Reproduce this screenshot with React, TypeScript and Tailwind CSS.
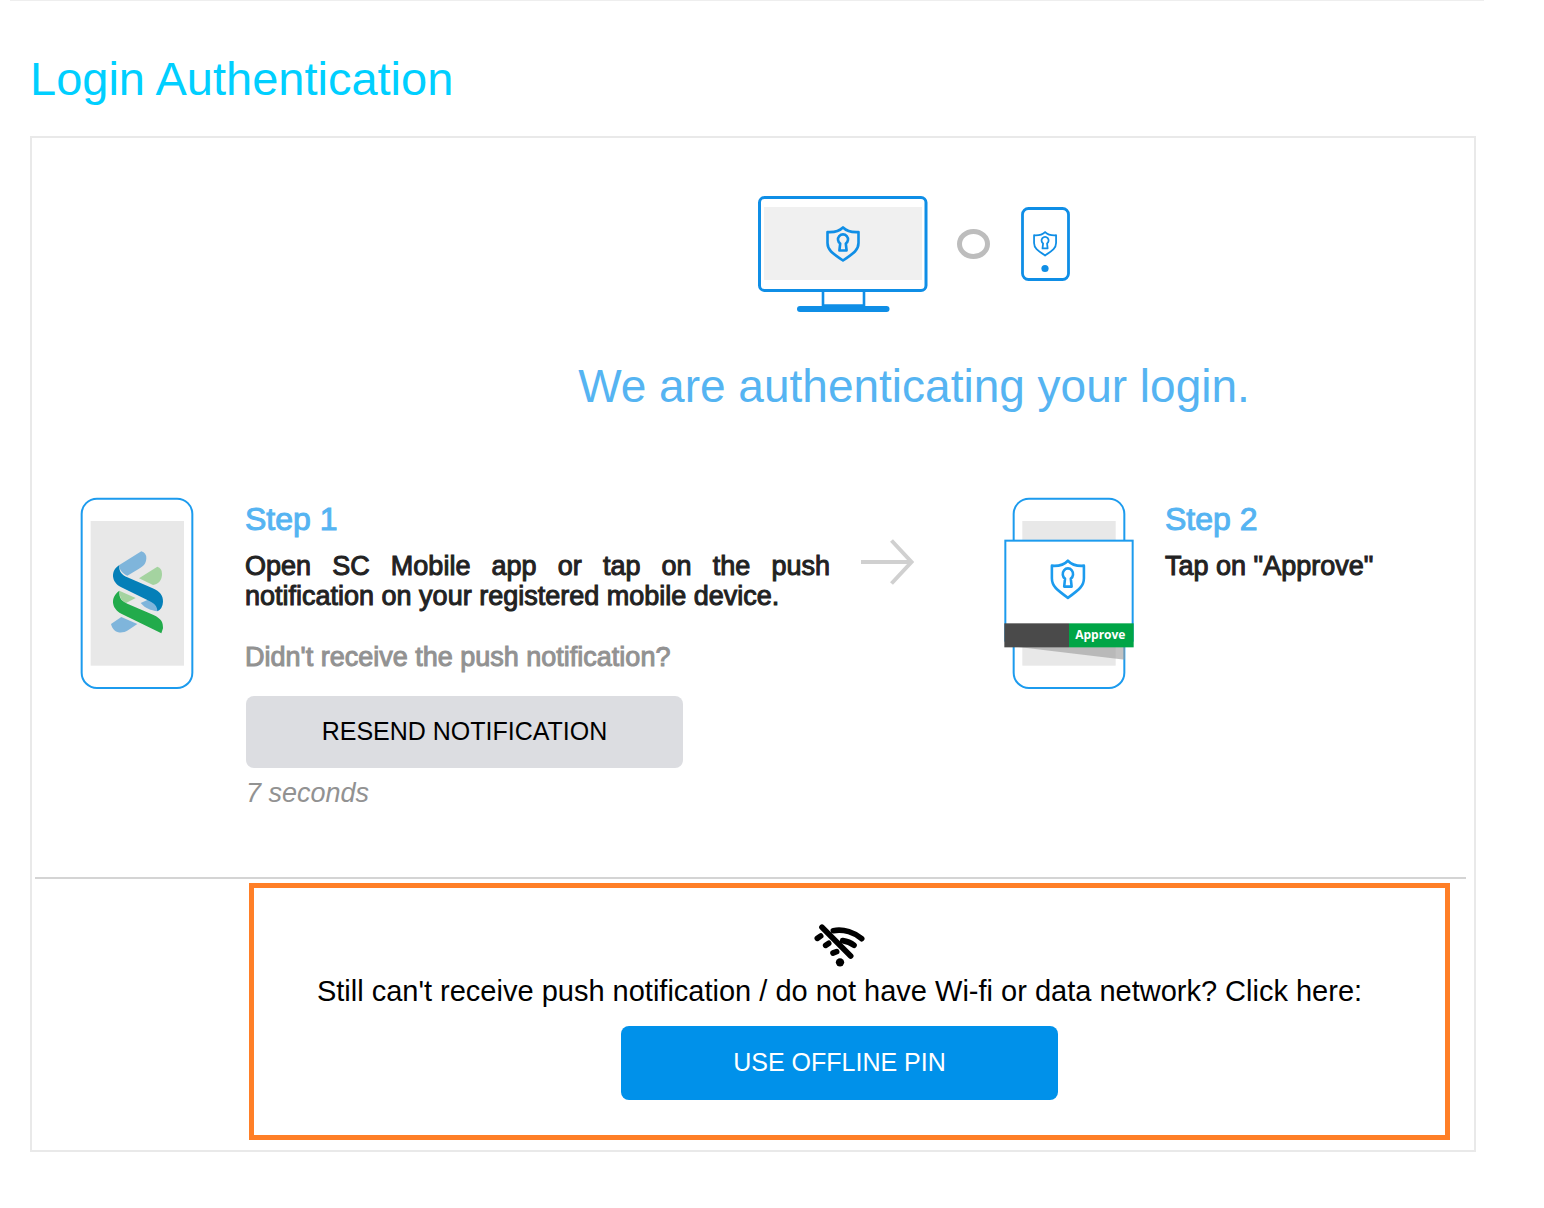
import React, { useState } from 'react';

function Shield() {
  return (
    <g fill="none" stroke="currentColor" strokeLinejoin="round">
      <path d="M17 1.5C13.500 5 9 6.500 1.500 6V17C1.500 24 6 27 17 34.500C28 27 32.500 24 32.500 17V6C25 6.500 20.500 5 17 1.500Z" />
      <path d="M14.200 17.500A5 5 0 1 1 19.800 17.500L20.600 24.500H13.400Z" />
    </g>
  );
}

function MonitorIcon() {
  return (
    <svg className="h-[117px] w-[170px] text-[#0f8ee6]" viewBox="0 0 170 117" fill="none" stroke="currentColor" aria-hidden="true">
      <rect x="6" y="11" width="158" height="73" fill="#f0f0f0" stroke="none" />
      <rect x="1.500" y="1.500" width="166.500" height="93" rx="5" strokeWidth="3" />
      <path d="M65 95v14.500h41V95" strokeWidth="2.600" />
      <path d="M42 113H128.500" strokeWidth="6" strokeLinecap="round" />
      <g transform="translate(68 30)" strokeWidth="2.600">
        <Shield />
      </g>
    </svg>
  );
}

function SmallPhoneIcon() {
  return (
    <svg className="mt-[11px] h-[74px] w-[49px] text-[#0f8ee6]" viewBox="0 0 49 74" fill="none" stroke="currentColor" aria-hidden="true">
      <rect x="1.500" y="1.500" width="46" height="71" rx="6" strokeWidth="2.800" />
      <g transform="translate(12 24) scale(0.710)" strokeWidth="2.500">
        <Shield />
      </g>
      <circle cx="24" cy="61.500" r="3.600" fill="currentColor" stroke="none" />
    </svg>
  );
}

function AppPhone() {
  return (
    <svg className="h-[192px] w-[114px] shrink-0" viewBox="30 36 342 576" fill="none" aria-hidden="true">
      <rect x="62" y="108" width="280" height="434" fill="#e8e8e8" />
      <rect x="35" y="41" width="332" height="568" rx="46" stroke="#1c9bee" strokeWidth="6" />
      <path d="M214 199Q229 203 229 220C228 238 220 244 207 251L172 272C160 266 148 258 148 240Z" fill="#7fb5db" />
      <path d="M262 245Q276 249 276 266C276 286 266 297 249 300L207 280Z" fill="#a4d3a0" />
      <path d="M148 317L197 339L168 354Q148 345 148 317Z" fill="#a4d3a0" />
      <path d="M212 354L237 343L270 362L262 379C243 376 225 370 212 354Z" fill="#7fb5db" />
      <path d="M154 396L202 417L174 436C155 448 129 445 123 417Z" fill="#7fb5db" />
      <path d="M148 240C146 262 157 270 172 277L248 310C270 320 279 331 279 350Q278 371 262 379C262 364 254 356 238 348L154 307C124 292 120 258 148 240Z" fill="#047fb8" />
      <path d="M148 317C146 341 157 349 172 356L249 389C277 402 279 413 279 430L274 445L154 386C124 370 120 337 148 317Z" fill="#22ab4b" />
    </svg>
  );
}

function ApprovePhone() {
  return (
    <svg className="h-[192px] w-[130px] shrink-0" viewBox="42 36 390 576" fill="none" aria-hidden="true">
      <rect x="97" y="108" width="280" height="434" fill="#e8e8e8" />
      <rect x="71" y="41" width="332" height="568" rx="46" stroke="#1c9bee" strokeWidth="6" />
      <path d="M85 486H405V524Z" fill="#999" fillOpacity="0.600" />
      <rect x="46" y="167" width="382" height="300" fill="#fff" stroke="#1c9bee" strokeWidth="6" />
      <rect x="43" y="415" width="194" height="72" fill="#4a4a4a" />
      <rect x="237" y="415" width="194" height="72" fill="#00a546" />
      <text x="331" y="462" textAnchor="middle" fill="#fff" fontSize="36" fontWeight="700" fontFamily="Open Sans, sans-serif">Approve</text>
      <g transform="translate(181 222) scale(3.100 3.380)" strokeWidth="2.500" className="text-[#1c9bee]">
        <Shield />
      </g>
    </svg>
  );
}

function ArrowIcon() {
  return (
    <svg className="mt-[42px] h-[46px] w-[54px] shrink-0" viewBox="0 0 54 46" fill="none" stroke="#d0d0d0" strokeWidth="4" aria-hidden="true">
      <path d="M1 23H51M31.500 1.500L51.500 23L31.500 44.500" />
    </svg>
  );
}

function OfflineIcon() {
  return (
    <svg className="h-[44px] w-[52px]" viewBox="40 43 156 132" fill="none" stroke="#000" strokeWidth="17" strokeLinecap="round" aria-hidden="true">
      <path d="M64 53L150 139" />
      <path d="M98 63C130 57 162 69 183 87" />
      <path d="M126 93Q146 96 160 107" />
      <path d="M50 86L60 79M75 107L84 101M97 130L108 126" />
      <circle cx="118" cy="158" r="12.500" fill="#000" stroke="none" />
    </svg>
  );
}

export default function App() {
  const [seconds, setSeconds] = useState(7);

  return (
    <div className="bg-white pb-14 font-['Liberation_Sans',Arial,sans-serif]">
      <div className="mr-[60px] ml-[10px] border-t border-[#eee]" />
      <main className="mr-[68px] ml-[30px]">
        <h1 className="pt-12 pb-[27px] text-[47px] leading-[60px] text-[#00cfff]">Login Authentication</h1>

        <section className="border-2 border-[#e9e9e9]">
          <div className="flex flex-col items-center pt-[58px] pl-[322px]">
            <div className="flex items-start">
              <MonitorIcon />
              <svg className="mt-8 mr-[31px] ml-[29px] h-[32px] w-[33px]" viewBox="0 0 33 32" fill="none" aria-hidden="true">
                <ellipse cx="16.500" cy="16" rx="14" ry="12.500" stroke="#bdbdbd" strokeWidth="5" />
              </svg>
              <SmallPhoneIcon />
            </div>
            <h2 className="mt-[45px] text-[46px] leading-[56px] text-[#55b4f2]">We are authenticating your login.</h2>
          </div>

          <div className="flex items-start pt-[83px] pl-[48px]">
            <AppPhone />
            <div className="ml-[51px] flex-1">
              <h3 className="pt-1 text-[32px] leading-[36px] text-[#55b4f2] [-webkit-text-stroke:1px]">Step 1</h3>
              <p className="mt-[14px] text-justify text-[27px] leading-[30px] text-[#222] [-webkit-text-stroke:1px]">
                Open SC Mobile app or tap on the push notification on your registered mobile device.
              </p>
              <p className="mt-[31px] text-[27px] leading-[30px] text-[#929292] [-webkit-text-stroke:1px]">
                Didn't receive the push notification?
              </p>
              <button
                type="button"
                onClick={() => setSeconds(7)}
                className="mt-6 ml-px block h-[72px] w-[437px] rounded-lg bg-[#dcdde1] text-[25px] text-black"
              >
                RESEND NOTIFICATION
              </button>
              <p className="mt-[10px] ml-px text-[27px] leading-[30px] text-[#929292] italic">{seconds} seconds</p>
            </div>
            <div className="mr-[90px] ml-[30px] w-[54px]">
              <ArrowIcon />
            </div>
            <ApprovePhone />
            <div className="ml-[31px] w-[309px]">
              <h3 className="pt-1 text-[32px] leading-[36px] text-[#55b4f2] [-webkit-text-stroke:1px]">Step 2</h3>
              <p className="mt-[14px] text-[27px] leading-[30px] text-[#222] [-webkit-text-stroke:1px]">Tap on "Approve"</p>
            </div>
          </div>

          <hr className="mt-[69px] mr-2 ml-[3px] border-t-2 border-[#d4d4d4]" />

          <div className="mt-1 mr-6 mb-[10px] ml-[217px] flex flex-col items-center border-[5px] border-[#ff7f27] pt-[36px] pr-5 pb-[35px]">
            <OfflineIcon />
            <p className="mt-[6px] text-[29px] leading-[34px] text-black">
              Still can't receive push notification / do not have Wi-fi or data network? Click here:
            </p>
            <button type="button" className="mt-[18px] h-[74px] w-[437px] rounded-lg bg-[#0091ea] text-[25px] text-white">
              USE OFFLINE PIN
            </button>
          </div>
        </section>
      </main>
    </div>
  );
}
